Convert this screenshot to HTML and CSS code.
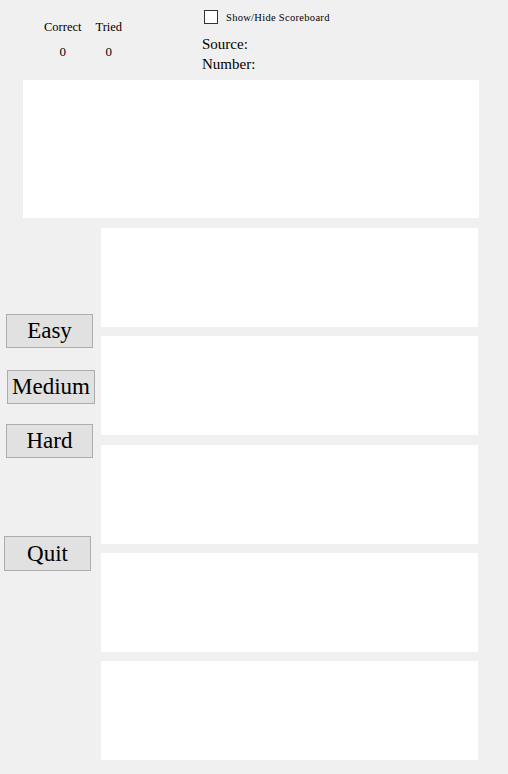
FILE: index.html
```html
<!DOCTYPE html>
<html>
<head>
<meta charset="utf-8">
<link rel="stylesheet" href="styles.css">
</head>
<body>
<div class="header">
  <div class="score">
    <div class="score-col">
      <div class="score-label">Correct</div>
      <div class="score-value">0</div>
    </div>
    <div class="score-col">
      <div class="score-label">Tried</div>
      <div class="score-value">0</div>
    </div>
  </div>
  <div class="info">
    <label class="toggle"><span class="box"></span><span class="toggle-text">Show/Hide Scoreboard</span></label>
    <div class="info-line">Source:</div>
    <div class="info-line">Number:</div>
  </div>
</div>
<div class="question"></div>
<div class="main">
  <div class="controls">
    <button class="btn btn-easy">Easy</button>
    <button class="btn btn-medium">Medium</button>
    <button class="btn btn-hard">Hard</button>
    <button class="btn btn-quit">Quit</button>
  </div>
  <div class="answers">
    <div class="answer"></div>
    <div class="answer"></div>
    <div class="answer answer-shift"></div>
    <div class="answer"></div>
    <div class="answer"></div>
  </div>
</div>
</body>
</html>
```
FILE: styles.css
```css
html, body {
  margin: 0;
  padding: 0;
  background: #f0f0f0;
  font-family: "Liberation Serif", serif;
  color: #000;
}
.header {
  height: 80px;
  display: flex;
}
.score {
  display: flex;
  gap: 14px;
  padding-left: 44px;
  padding-top: 20px;
  width: 157px;
  box-sizing: border-box;
}
.score-col {
  display: flex;
  flex-direction: column;
  align-items: center;
}
.score-label {
  font-size: 12.5px;
  line-height: 15px;
}
.score-value {
  font-size: 13px;
  line-height: 15px;
  margin-top: 9px;
}
.info {
  padding-top: 10px;
}
.toggle {
  display: flex;
  align-items: center;
  margin-left: 47px;
  height: 14px;
}
.box {
  width: 14px;
  height: 14px;
  box-sizing: border-box;
  border: 1px solid #333;
  background: #fff;
}
.toggle-text {
  font-size: 10.5px;
  margin-left: 8px;
  letter-spacing: 0.3px;
}
.info-line {
  font-size: 15px;
  line-height: 20px;
  margin-left: 45px;
}
.info-line:first-of-type {
  margin-top: 10px;
}
.question {
  margin-left: 23px;
  width: 456px;
  height: 138px;
  background: #fff;
}
.main {
  display: flex;
  margin-top: 10px;
}
.controls {
  width: 101px;
  display: flex;
  flex-direction: column;
  align-items: flex-start;
}
.btn {
  box-sizing: border-box;
  width: 87px;
  height: 34px;
  border: 1px solid #adadad;
  background: #e1e1e1;
  font-family: "Liberation Serif", serif;
  font-size: 23px;
  padding: 0;
  color: #000;
}
.btn-easy { margin-top: 86px; margin-left: 6px; }
.btn-medium { margin-top: 22px; margin-left: 7px; width: 88px; }
.btn-hard { margin-top: 20px; margin-left: 6px; }
.btn-quit { margin-top: 78px; margin-left: 4px; height: 35px; }
.answers {
  display: flex;
  flex-direction: column;
  gap: 9px;
}
.answer {
  width: 377px;
  height: 99px;
  background: #fff;
}
.answer-shift {
  margin-top: 1px;
}
```
